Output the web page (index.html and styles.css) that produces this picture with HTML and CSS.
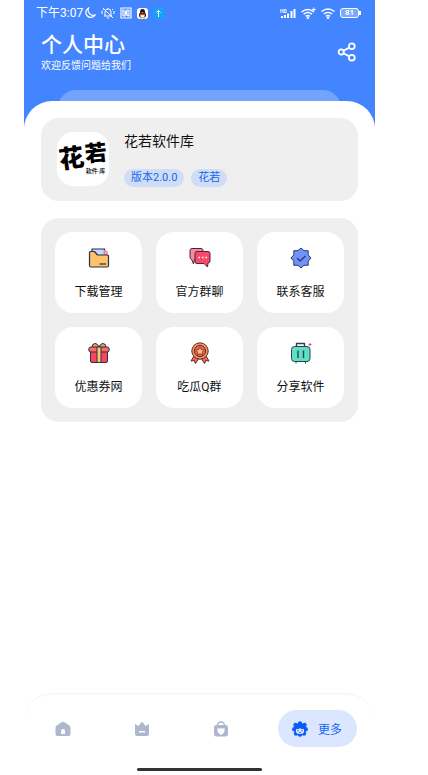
FILE: index.html
```html
<!DOCTYPE html>
<html lang="zh-CN">
<head>
<meta charset="UTF-8">
<meta name="viewport" content="width=device-width, initial-scale=1.0">
<title>个人中心</title>
<link rel="stylesheet" href="styles.css">
</head>
<body>
    <div class="app">
        <header class="header">
            <div class="status">
                <div class="status-left">
                    <span class="time">下午3:07</span>
                    <!-- moon -->
                    <svg width="12" height="12" viewBox="0 0 12 12" fill="none" stroke="#fff" stroke-width="1.200"><path d="M4.500 1A5 5 0 1 0 11 8.200 5.400 5.400 0 0 1 4.500 1z"/></svg>
                    <!-- muted bell -->
                    <svg width="14" height="12" viewBox="0 0 14 12" fill="none" stroke="#fff"><path d="M3 9h8M4 9V5a3 3 0 0 1 6 0v4M6 11h2M7 2V1M2 1l10 10M1 4v3M13 4v3M2.500 2.500L1.500 3.500M11 2l1 1"/></svg>
                    <!-- nfc -->
                    <svg width="12" height="12" viewBox="0 0 12 12" fill="none" stroke="#fff" stroke-width="1.200"><path d="M1 1h10v10H1zM3 9h2V3.500l3 5.500M9 3H7v5.500L5 4M3 9V3h1.500M9 3v6H7.500"/></svg>
                    <!-- penguin -->
                    <svg width="11" height="11" viewBox="0 0 11 11"><rect width="11" height="11" rx="3" fill="#fff"/><ellipse cx="5.500" cy="4" rx="2.500" ry="3" fill="#181818"/><ellipse cx="5.500" cy="7" rx="3.500" ry="3" fill="#181818"/><ellipse cx="5.500" cy="7.800" rx="2.200" ry="2" fill="#fff"/><path d="M2.500 5.300q3 1.500 6 0v1.200q-3 1.400-6 0z" fill="#e33"/><path d="M4 4.200h3l-1.500 1z" fill="#fa3"/><path d="M3 10h2M6 10h2" stroke="#fa3"/></svg>
                    <!-- upload -->
                    <svg width="11" height="11" viewBox="0 0 11 11"><rect width="11" height="11" rx="3" fill="#12a5f5"/><path d="M5.500 9V2.500M3.500 4.500l2-2 2 2" fill="none" stroke="#fff"/></svg>
                </div>
                <div class="status-right">
                    <!-- signal -->
                    <svg width="16" height="12" viewBox="0 0 16 12" fill="#fff"><path d="M1 9h2v2H1zM4 8h2v3H4zM7 6.500h2V11H7zM10.500 4h2v7h-2zM13.500 2h2v9h-2z"/><text class="hd" x="0" y="6">HD</text></svg>
                    <!-- wifi plus -->
                    <svg width="15" height="12" viewBox="0 0 15 12" fill="none" stroke="#fff" stroke-width="1.500"><path d="M.5 5q6-5 12.500 0M2.600 7.200q4.200-3.200 8.400 0M4.700 9.300q2.100-1.600 4.200 0"/><path d="M12.800 .5v4M10.800 2.500h4" stroke-width="1"/><circle cx="6.800" cy="10.800" r=".5"/></svg>
                    <!-- wifi -->
                    <svg width="14" height="12" viewBox="0 0 14 12" fill="none" stroke="#fff" stroke-width="1.500"><path d="M.5 4.500q6.500-5 13 0M2.700 7q4.300-3.200 8.600 0M4.900 9.200q2.100-1.600 4.200 0"/><circle cx="7" cy="10.800" r=".5"/></svg>
                    <span class="battery"><span class="battery-body">81</span></span>
                </div>
            </div>
            <div class="heading">
                <div>
                    <h1>个人中心</h1>
                    <p>欢迎反馈问题给我们</p>
                </div>
                <button class="share" type="button" aria-label="分享">
                    <svg width="20" height="20" viewBox="0 0 20 20" fill="none" stroke="#fff" stroke-width="1.800"><circle cx="4.200" cy="10" r="2.600"/><circle cx="14.800" cy="4.200" r="2.900"/><circle cx="14.800" cy="15.800" r="2.900"/><path d="M6.500 8.800l5.800-3.200M6.500 11.200l5.800 3.200"/></svg>
                </button>
            </div>
            <div class="strip"></div>
        </header>

        <main class="panel">
            <section class="card profile">
                <div class="logo">
                    <span class="logo-flower">花</span>
                    <span class="logo-side">
                        <span class="logo-ruo">若</span>
                        <span class="logo-sub">软件·库</span>
                    </span>
                </div>
                <div class="info">
                    <h2>花若软件库</h2>
                    <div class="tags">
                        <span class="tag">版本2.0.0</span>
                        <span class="tag">花若</span>
                    </div>
                </div>
            </section>

            <section class="card grid">
                <a class="tile" href="#">
                    <svg width="22" height="22" viewBox="0 0 22 22" stroke="#2b3047" stroke-width="1.200" stroke-linejoin="round"><path d="M4 9V2h12.500v7z" fill="#c3d9ff"/><path d="M16.500 3.500l2.500 1V8h-2.500z" fill="#ffb3bf" stroke="#e67d91"/><path d="M1.500 5.500q0-1 1-1h4l3 3.500h10q1 0 1 1v9.500q0 1.500-1.500 1.500H3q-1.500 0-1.500-1.500z" fill="#ffc16b"/><path d="M11.500 17h6.500" fill="none"/></svg>
                    <span>下载管理</span>
                </a>
                <a class="tile" href="#">
                    <svg width="22" height="22" viewBox="0 0 22 22" stroke="#4a2440" stroke-linejoin="round"><path d="M3 1.500h9q2 0 2 2v9H5.500L4.500 17 3 13q-2-1-2-3V3.500q0-2 2-2z" fill="#f58a9e"/><path d="M8 4.500h11q2 0 2 2V14q0 2-2 2l-.5 4L15 16.500H8q-2 0-2-2v-8q0-2 2-2z" fill="#fb4868"/><path d="M9.500 10.500H11M13 10.500h1.500M16.500 10.500H18" stroke="#fff" stroke-width="1.500"/></svg>
                    <span>官方群聊</span>
                </a>
                <a class="tile" href="#">
                    <svg width="22" height="22" viewBox="0 0 22 22" stroke="#2b3a68" stroke-linejoin="round"><path d="M11 1l3 2.700h4.200v4.200L21 11l-2.800 3.100v4.200H14L11 21l-3-2.700H3.800v-4.200L1 11l2.800-3.100V3.700H8z" fill="#6f93fa"/><path d="M7 11l3 3 5.500-5" fill="none" stroke-width="1.300"/></svg>
                    <span>联系客服</span>
                </a>
                <a class="tile" href="#">
                    <svg width="22" height="22" viewBox="0 0 22 22" stroke="#2b3047" stroke-linejoin="round"><path d="M10.500 5.500H4q0-4 3-4 2.500 0 4 3 1.500-3 4-3 3 0 3 4z" fill="#e8a756"/><path d="M2.500 9h17v10q0 1.500-1.500 1.500H4q-1.500 0-1.500-1.500z" fill="#f9465f"/><rect x=".8" y="5" width="20.400" height="5" rx="2" fill="#ff6a67"/><path d="M9 5h4v15.500H9z" fill="#ffc471"/></svg>
                    <span>优惠券网</span>
                </a>
                <a class="tile" href="#">
                    <svg width="22" height="22" viewBox="0 0 22 22" stroke="#5a2d34" stroke-linejoin="round"><path d="M5 14l-3 5 3-.5L6.500 21.500 10 16zM17 14l3 5-3-.5-1.500 3L12 16z" fill="#fb625b"/><circle cx="11" cy="9" r="8.200" fill="#f79c4a"/><circle cx="11" cy="9" r="5.700" fill="#fb5b5e"/><path d="M11 5l1.300 2.700 3 .4-2.200 2 .6 3L11 11.700l-2.700 1.400.6-3-2.200-2 3-.4z" fill="#ffc85f" stroke-width=".7"/></svg>
                    <span>吃瓜Q群</span>
                </a>
                <a class="tile" href="#">
                    <svg width="22" height="22" viewBox="0 0 22 22" fill="none" stroke="#2b4058" stroke-linejoin="round"><path d="M6.500 4.500V1.500h8v3" stroke-width="1.400"/><path d="M6 19v2.500M15.500 19v2.500"/><rect x="1.500" y="4.500" width="18.500" height="15" rx="3" fill="#5fe0c0"/><path d="M8 8.500V16M13.500 8.500V16" stroke-width="1.400"/><path d="M18.500 2.500h3M20 1v3" stroke="#f9465f"/></svg>
                    <span>分享软件</span>
                </a>
            </section>
        </main>

        <nav class="nav">
            <a class="nav-item" href="#" aria-label="首页">
                <svg width="16" height="16" viewBox="0 0 16 16" fill="#adb8ce"><path fill-rule="evenodd" d="M7 1q1-.7 2 0l5 3.300q1.500 1 1.500 2.500V13q0 2-2 2h-11q-2 0-2-2V6.800q0-1.500 1.500-2.500zM6 13h4v-3q0-2-2-2T6 10z"/></svg>
            </a>
            <a class="nav-item" href="#" aria-label="会员">
                <svg width="16" height="16" viewBox="0 0 16 16" fill="#adb8ce"><path fill-rule="evenodd" d="M1 3l3.500 2L8 .5 11.500 5 15 3v10q0 2-2 2H3q-2 0-2-2zM5 10v1.500h6V10z"/></svg>
            </a>
            <a class="nav-item" href="#" aria-label="商店">
                <svg width="16" height="16" viewBox="0 0 16 16" fill="#adb8ce"><path d="M4.500 5V4.500a3.500 3.500 0 0 1 7 0V5" fill="none" stroke="#adb8ce" stroke-width="1.500"/><rect x="1" y="4" width="14" height="11.500" rx="2.500"/><path d="M4.500 7l2.300.8L8 7l1.200.8L11.500 7v3q0 2-3.500 4-3.500-2-3.500-4z" fill="#fff"/></svg>
            </a>
            <a class="nav-item active" href="#">
                <svg width="16" height="16" viewBox="0 0 16 16" fill="#0b5cf5"><circle cx="8" cy="8" r="6"/><circle cx="8" cy="2.500" r="2.200"/><circle cx="3.500" cy="4" r="2.200"/><circle cx="12.500" cy="4" r="2.200"/><circle cx="2.300" cy="8.300" r="2.200"/><circle cx="13.700" cy="8.300" r="2.200"/><circle cx="4" cy="12.500" r="2.200"/><circle cx="12" cy="12.500" r="2.200"/><circle cx="8" cy="13.600" r="2.200"/><path d="M4 8l2 .3 2-1 2 1 2-.3v2.500q0 2.500-4 2.500t-4-2.500z" fill="#dbe7ff"/><circle cx="6" cy="9.800" r=".7"/><circle cx="10" cy="9.800" r=".7"/><path d="M7 11.500h2" stroke="#0b5cf5" stroke-width=".8"/></svg>
                <span>更多</span>
            </a>
        </nav>
        <div class="home-bar"></div>
    </div>
</body>
</html>
```
FILE: styles.css
```css
* {
    box-sizing: border-box;
}

body {
    margin: 0;
    padding: 0 53px 0 24px;
    background-color: #fff;
    font-family: Roboto, "Noto Sans CJK SC", sans-serif;
    color: #111;
}

h1, h2, p {
    margin: 0;
    font-weight: 400;
}

a {
    color: inherit;
    text-decoration: none;
}

svg {
    display: block;
}

.app {
    display: flex;
    flex-direction: column;
    min-height: 100vh;
}

/* Header */
.header {
    background-color: #4285ff;
    color: #fff;
    padding-bottom: 36px;
}

.status {
    display: flex;
    justify-content: space-between;
    align-items: center;
    height: 26px;
    padding: 0 14px 0 12px;
}

.status-left,
.status-right {
    display: flex;
    align-items: center;
    gap: 5px;
}

.time {
    font-size: 12px;
    line-height: 16px;
    margin-right: -4px;
}

.hd {
    font-size: 5px;
    font-weight: 700;
}

.battery {
    display: flex;
    align-items: center;
}

.battery::after {
    content: "";
    width: 2px;
    height: 4px;
    background-color: #fff;
}

.battery-body {
    width: 19px;
    height: 10px;
    border: 1px solid #fff;
    border-radius: 3px;
    background-color: #79a8ff;
    font-size: 8px;
    font-weight: 700;
    line-height: 8px;
    text-align: center;
}

.heading {
    display: flex;
    justify-content: space-between;
    align-items: center;
    height: 52px;
    padding: 0 18px 0 17px;
    margin-bottom: 12px;
}

.heading h1 {
    font-size: 21px;
    font-weight: 500;
    line-height: 28px;
}

.heading p {
    font-size: 10px;
    line-height: 14px;
}

.share {
    padding: 0;
    border: 0;
    background: none;
    cursor: pointer;
}

.strip {
    height: 36px;
    margin: 0 34px -36px;
    border-radius: 18px 18px 0 0;
    background-color: #71a3ff;
}

/* White panel over the header */
.panel {
    flex: 1;
    display: flex;
    flex-direction: column;
    gap: 17px;
    margin-top: -25px;
    padding: 17px;
    border-radius: 28px 28px 0 0;
    background-color: #fff;
}

.card {
    border-radius: 18px;
    background-color: #efefef;
}

.profile {
    display: flex;
    align-items: center;
    gap: 15px;
    padding: 13px 16px 14px;
}

.logo {
    display: flex;
    align-items: center;
    justify-content: center;
    width: 52px;
    height: 54px;
    border-radius: 16px;
    background-color: #fff;
    color: #000;
    font-weight: 900;
}

.logo-flower {
    font-size: 25px;
    line-height: 26px;
    transform: rotate(-8deg);
}

.logo-side {
    display: flex;
    flex-direction: column;
    align-items: center;
}

.logo-ruo {
    font-size: 22px;
    line-height: 24px;
    transform: rotate(-6deg);
}

.logo-sub {
    font-size: 6px;
    font-weight: 500;
    line-height: 10px;
}

.info h2 {
    font-size: 14px;
    line-height: 20px;
    margin-bottom: 18px;
}

.tags {
    display: flex;
    gap: 7px;
}

.tag {
    padding: 0 7px;
    border-radius: 9px;
    background-color: #d0def5;
    color: #1465f0;
    font-size: 11px;
    line-height: 18px;
}

.grid {
    display: grid;
    grid-template-columns: repeat(3, 1fr);
    gap: 14px;
    padding: 14px;
}

.tile {
    display: flex;
    flex-direction: column;
    align-items: center;
    gap: 14px;
    padding: 15px 0 12px;
    border-radius: 18px;
    background-color: #fff;
    font-size: 12px;
    line-height: 18px;
}

/* Bottom navigation */
.nav {
    display: flex;
    justify-content: space-between;
    align-items: center;
    padding: 17px 18px 21px 0;
    border-radius: 28px 28px 0 0;
    background-color: #fff;
    box-shadow: inset 0 2px 2px -1px rgba(0, 0, 0, 0.06);
}

.nav-item {
    flex: 1;
    display: flex;
    justify-content: center;
    align-items: center;
    height: 37px;
}

.active {
    flex: none;
    gap: 10px;
    padding: 0 15px 0 14px;
    margin-left: 18px;
    border-radius: 19px;
    background-color: #dbe7ff;
    color: #1465f0;
    font-size: 12px;
}

.home-bar {
    width: 125px;
    height: 3px;
    margin: 0 auto 4px;
    border-radius: 2px;
    background-color: #333;
}
```
